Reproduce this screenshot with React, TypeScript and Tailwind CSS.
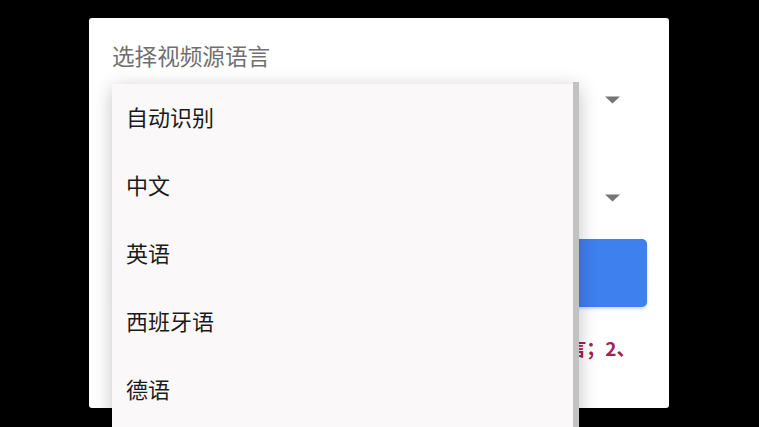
import React from "react";

const languages = ["自动识别", "中文", "英语", "西班牙语", "德语", "法语", "日语"];

function Caret() {
  return (
    <svg width="15" height="8" viewBox="0 0 15 8" className="mr-[26px] shrink-0">
      <polygon points="0,0.5 15,0.5 7.5,7.5" fill="#757575" />
    </svg>
  );
}

function SelectRow({ value }: { value: string }) {
  return (
    <div className="flex h-[40px] items-center justify-between">
      <span className="text-[20px] text-[#212121]">{value}</span>
      <Caret />
    </div>
  );
}

export default function App() {
  return (
    <div
      className="relative h-[427px] w-full overflow-hidden bg-black"
      style={{ fontFamily: '"Noto Sans CJK SC", "Noto Sans", sans-serif' }}
    >
      <div className="ml-[89px] mt-[18px] flex h-[390px] w-[580px] flex-col overflow-hidden rounded-[3px] bg-white px-[23px] pt-[27px]">
        <div className="text-[22.6px] leading-[22px] text-[#707070]">选择视频源语言</div>

        <div className="mt-[13px]">
          <SelectRow value="自动识别" />
        </div>

        <div className="mt-[58px]">
          <SelectRow value="中文" />
        </div>

        <button className="ml-[2px] mt-[21px] h-[68px] w-[533px] shrink-0 rounded-[5px] bg-[#3f80ef] text-[20px] text-white shadow-[0_2px_3px_rgba(63,128,239,0.3)]">
          开始翻译
        </button>

        <p className="ml-[7px] mt-[28px] text-[19px] font-bold leading-[26px] text-[#a3224f]">
          注：1、请确保视频中的人声清晰，并选择正确的源语言；2、翻译结果仅供参考
        </p>
      </div>

      <div className="absolute left-[112px] top-[84px] h-[420px] w-[467px] bg-[#faf8f9] shadow-[0_4px_18px_rgba(0,0,0,0.24)]">
        <div className="absolute right-0 top-[-2px] h-full w-[6px] bg-[#c2c2c2]" />
        {languages.map((lang) => (
          <div
            key={lang}
            className="flex h-[68px] items-center pb-[4px] pl-[14px] text-[22px] text-[#1a1a1a]"
          >
            {lang}
          </div>
        ))}
      </div>
    </div>
  );
}
